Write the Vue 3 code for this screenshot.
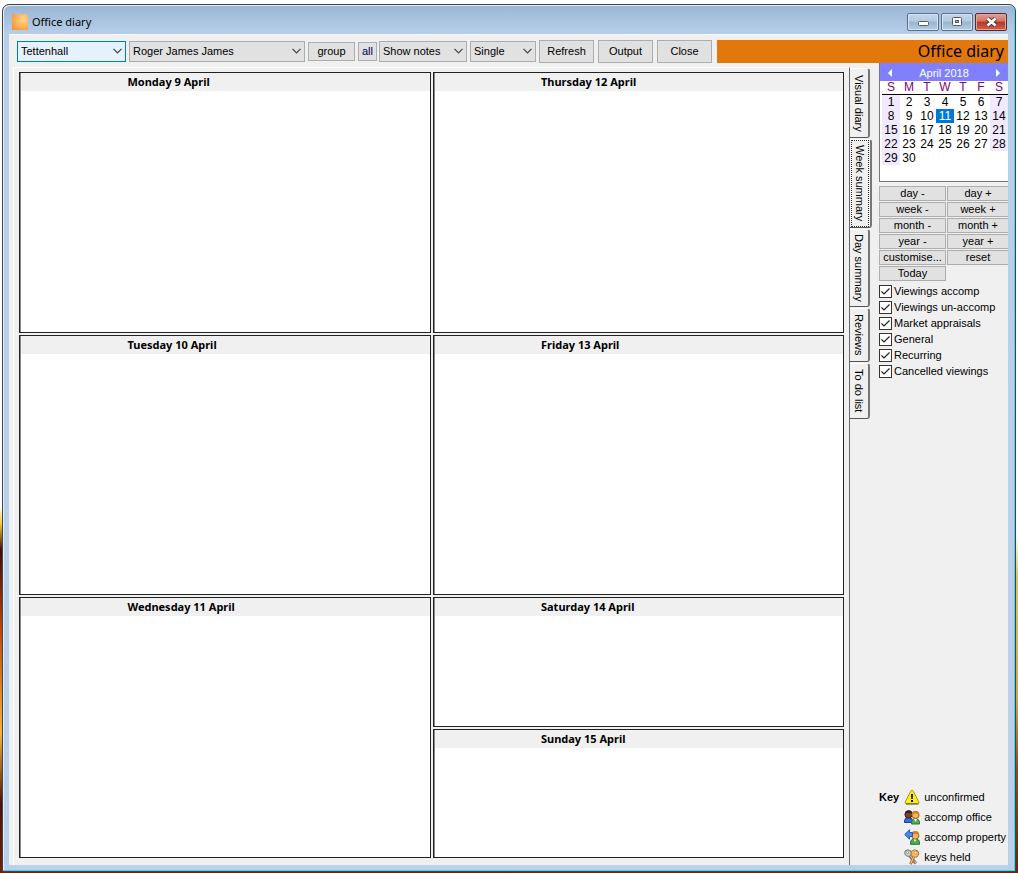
<script setup>
import { ref } from 'vue'

const combos = [
  { id: 'office', label: 'Office', value: 'Tettenhall', options: ['Tettenhall'] },
  { id: 'person', label: 'Person', value: 'Roger James James', options: ['Roger James James'] },
]
const viewCombos = [
  { id: 'notes', label: 'Notes', value: 'Show notes', options: ['Show notes', 'Hide notes'] },
  { id: 'mode', label: 'Mode', value: 'Single', options: ['Single', 'Multiple'] },
]
const actions = ['Refresh', 'Output', 'Close']

const leftDays = ['Monday 9 April', 'Tuesday 10 April', 'Wednesday 11 April']
const rightDays = ['Thursday 12 April', 'Friday 13 April']
const weekendDays = ['Saturday 14 April', 'Sunday 15 April']

const tabs = [
  { id: 'visual', label: 'Visual diary' },
  { id: 'week', label: 'Week summary' },
  { id: 'day', label: 'Day summary' },
  { id: 'reviews', label: 'Reviews' },
  { id: 'todo', label: 'To do list' },
]
const activeTab = ref('week')

const weekdays = ['S', 'M', 'T', 'W', 'T', 'F', 'S']
const weeks = [0, 1, 2, 3, 4].map((w) =>
  weekdays.map((_, d) => {
    const n = w * 7 + d + 1
    return n <= 30 ? n : null
  })
)
const selectedDay = ref(11)

const steps = ['day -', 'day +', 'week -', 'week +', 'month -', 'month +', 'year -', 'year +', 'customise...', 'reset', 'Today']

const filters = ref([
  { label: 'Viewings accomp', on: true },
  { label: 'Viewings un-accomp', on: true },
  { label: 'Market appraisals', on: true },
  { label: 'General', on: true },
  { label: 'Recurring', on: true },
  { label: 'Cancelled viewings', on: true },
])
</script>

<template>
  <div class="desktop">
    <main class="window">
      <header class="titlebar">
        <span class="app-icon"></span>
        <span class="title">Office diary</span>
        <div class="caption-buttons">
          <button class="cap" type="button" aria-label="Minimise">
            <svg width="13" height="10" viewBox="0 0 13 10"><rect x="1.5" y="4.5" width="10" height="4" rx="1" fill="#fff" stroke="#535a68" /></svg>
          </button>
          <button class="cap" type="button" aria-label="Maximise">
            <svg width="12" height="10" viewBox="0 0 12 10"><rect x="1.5" y="0.5" width="9" height="8" rx="1" fill="#fff" stroke="#535a68" /><rect x="4.5" y="3.5" width="3" height="2" fill="#9bb5d2" stroke="#535a68" /></svg>
          </button>
          <button class="cap cap-close" type="button" aria-label="Close window">
            <svg width="13" height="10" viewBox="0 0 13 10"><path d="M2.5 1.5 L10.5 8.5 M10.5 1.5 L2.5 8.5" stroke="#5b3037" stroke-width="4.4" /><path d="M2.5 1.5 L10.5 8.5 M10.5 1.5 L2.5 8.5" stroke="#fff" stroke-width="2.6" /></svg>
          </button>
        </div>
      </header>

      <div class="client">
        <div class="toolbar">
          <span v-for="c in combos" :key="c.id" class="combo" :class="'combo-' + c.id">
            <select v-model="c.value" :aria-label="c.label">
              <option v-for="o in c.options" :key="o">{{ o }}</option>
            </select>
            <svg class="chevron" width="9" height="6" viewBox="0 0 9 6"><path d="M0.5 0.8 L4.5 4.8 L8.5 0.8" fill="none" stroke="#444" stroke-width="1.2" /></svg>
          </span>
          <button class="btn small group" type="button">group</button>
          <button class="btn small all" type="button">all</button>
          <span v-for="c in viewCombos" :key="c.id" class="combo" :class="'combo-' + c.id">
            <select v-model="c.value" :aria-label="c.label">
              <option v-for="o in c.options" :key="o">{{ o }}</option>
            </select>
            <svg class="chevron" width="9" height="6" viewBox="0 0 9 6"><path d="M0.5 0.8 L4.5 4.8 L8.5 0.8" fill="none" stroke="#444" stroke-width="1.2" /></svg>
          </span>
          <div class="actions">
            <button v-for="a in actions" :key="a" class="btn action" type="button">{{ a }}</button>
          </div>
          <h1 class="banner">Office diary</h1>
        </div>

        <div class="body">
          <div class="sheet">
            <div class="column">
              <section v-for="d in leftDays" :key="d" class="day"><h2>{{ d }}</h2></section>
            </div>
            <div class="column">
              <section v-for="d in rightDays" :key="d" class="day"><h2>{{ d }}</h2></section>
              <div class="weekend">
                <section v-for="d in weekendDays" :key="d" class="day"><h2>{{ d }}</h2></section>
              </div>
            </div>
          </div>

          <div class="tabs" role="tablist" aria-orientation="vertical">
            <button
              v-for="t in tabs"
              :key="t.id"
              type="button"
              role="tab"
              class="tab"
              :class="['tab-' + t.id, { active: activeTab === t.id }]"
              :aria-selected="activeTab === t.id"
              @click="activeTab = t.id"
            ><span>{{ t.label }}</span></button>
          </div>

          <aside class="side">
            <div class="calendar">
              <div class="cal-head">
                <button type="button" aria-label="Previous month"><svg width="4" height="8" viewBox="0 0 4 8"><path d="M4 0 L0 4 L4 8 Z" fill="#fff" /></svg></button>
                <span>April 2018</span>
                <button type="button" aria-label="Next month"><svg width="4" height="8" viewBox="0 0 4 8"><path d="M0 0 L4 4 L0 8 Z" fill="#fff" /></svg></button>
              </div>
              <table>
                <thead>
                  <tr><th v-for="(d, i) in weekdays" :key="i">{{ d }}</th></tr>
                </thead>
                <tbody>
                  <tr v-for="(w, i) in weeks" :key="i">
                    <td v-for="(n, j) in w" :key="j" :class="{ weekendcell: n && (j === 0 || j === 6), selected: n === selectedDay }">{{ n }}</td>
                  </tr>
                </tbody>
              </table>
            </div>

            <div class="steps">
              <button v-for="s in steps" :key="s" class="btn step" type="button">{{ s }}</button>
            </div>

            <div class="filters">
              <label v-for="f in filters" :key="f.label" class="filter">
                <span class="box">
                  <input v-model="f.on" type="checkbox" />
                  <svg v-if="f.on" width="13" height="13" viewBox="0 0 13 13"><path d="M2.5 6.5 L5 9 L10.5 3.5" fill="none" stroke="#222" stroke-width="1.2" /></svg>
                </span>
                {{ f.label }}
              </label>
            </div>

            <div class="key">
              <strong>Key</strong>
              <ul>
                <li>
                  <svg width="16" height="16" viewBox="0 0 16 16"><path d="M8 1.2 Q8.8 1.2 9.3 2.2 L14.8 13 Q15.3 14.6 13.8 14.7 H2.2 Q0.7 14.6 1.2 13 L6.7 2.2 Q7.2 1.2 8 1.2 Z" fill="#ffed18" stroke="#b89308" /><path d="M2 15 H14.5" stroke="#55501f" /><path d="M7 5 H9 L8.7 10 H7.3 Z" fill="#111" /><rect x="7" y="11" width="2" height="2" fill="#111" /></svg>
                  unconfirmed
                </li>
                <li>
                  <svg width="16" height="16" viewBox="0 0 16 16"><path d="M0.5 12 Q0.5 8.5 4.5 8.5 Q8.5 8.5 8.5 12 V13.5 H0.5 Z" fill="#3d6ae0" stroke="#1c3b9c" /><circle cx="4.5" cy="5.5" r="3.6" fill="#80431f" stroke="#3b211b" /><path d="M1 4.5 Q1.5 1.3 5 1.3 Q8 1.3 8 4.5 Q5 3.2 1 4.5Z" fill="#292129" /><path d="M7.5 14 Q7.5 9.7 11.5 9.7 Q15.5 9.7 15.5 14 V15 H7.5 Z" fill="#4eae4c" stroke="#267838" /><path d="M10 10 L11.5 13 L13 10Z" fill="#fff" /><circle cx="11.5" cy="6" r="3.6" fill="#f6b45c" stroke="#a45c13" /><path d="M8 5 Q8 1.5 12 2 Q15.5 2 15 5.5 Q13 3.8 8 5Z" fill="#d18122" /></svg>
                  accomp office
                </li>
                <li>
                  <svg width="16" height="16" viewBox="0 0 16 16"><path d="M6.5 14 Q6.5 9.8 11 9.8 Q15.5 9.8 15.5 14 V15.3 H6.5 Z" fill="#4eae4c" stroke="#267838" /><path d="M9.5 10 L11 13 L12.5 10Z" fill="#fff" /><circle cx="11.3" cy="6.5" r="3.7" fill="#f6b45c" stroke="#a45c13" /><path d="M7.6 5.5 Q7.8 2 11.3 2.1 Q15.3 2 15 6 Q12.8 4.3 7.6 5.5Z" fill="#d18122" /><path d="M0.7 5.5 L5.5 0.8 V3.5 H8.5 V7.5 H5.5 V10.2 Z" fill="#4a87ec" stroke="#245ab8" /></svg>
                  accomp property
                </li>
                <li>
                  <svg width="16" height="16" viewBox="0 0 16 16"><path d="M1 2 L4 0.8 L7 2 L7.5 5 L5.5 7.5 L2.5 7 L0.8 5 Z" fill="#c9c9c9" stroke="#777" /><circle cx="3.5" cy="3.5" r="1" fill="#fff" stroke="#777" stroke-width="0.6" /><path d="M6 7 L11.8 14.5" fill="none" stroke="#777" stroke-width="3" /><path d="M6.4 7 L11.8 14" fill="none" stroke="#d2d2d2" /><path d="M7.2 2.5 L10.5 0.8 L14 2 L14.8 5 L13 8 L9.8 8.3 L7.2 6 Z" fill="#efc078" stroke="#b47225" /><circle cx="11.6" cy="3.6" r="1.4" fill="#fff" stroke="#b47225" stroke-width="0.7" /><path d="M9.8 7.5 L6.5 15.2 M8 11.8 L10.3 12.8" fill="none" stroke="#b47225" stroke-width="2.8" /><path d="M9.8 7.5 L6.7 14.7" stroke="#f3cf93" /></svg>
                  keys held
                </li>
              </ul>
            </div>
          </aside>
        </div>
      </div>
    </main>
  </div>
</template>

<style>
html,
body {
  margin: 0;
  background: #fff;
}
</style>

<style scoped>
* {
  box-sizing: border-box;
}
.desktop {
  display: flex;
  min-height: 100vh;
  padding: 4px 2px 1px 2px;
  font-family: "Liberation Sans", Arial, sans-serif;
  font-size: 11px;
  line-height: 14px;
  color: #000;
  background:
    linear-gradient(#fff 0, #fff 61%, #e5c355 66%, #dba43c 80%, #a24310 88%, #6a2408 100%) right / 50% 100% no-repeat,
    linear-gradient(#fff 0, #fff 58%, #f5c83c 60%, #3b0d08 63%, #b9480d 72%, #f3b43f 84%, #4b1407 92%, #6a2408 100%);
}
button,
select {
  margin: 0;
  font: inherit;
  color: inherit;
}
.window {
  flex: 1;
  min-width: 0;
  display: flex;
  flex-direction: column;
  padding: 0 7px 6px 6px;
  border: 1px solid #3c444d;
  border-radius: 7px 7px 0 0;
  background: linear-gradient(#9ab5d3 0, #b7cfea 30px, #b9d1ea 100%);
  box-shadow: inset -1px -1px 0 #3fd6f5, inset 1px 1px 0 #e4eef8;
}
.titlebar {
  display: flex;
  align-items: center;
  height: 29px;
  padding: 5px 1px 0 3px;
  gap: 4px;
}
.app-icon {
  width: 16px;
  height: 16px;
  background: radial-gradient(circle at 70% 35%, #ffd98e, #fbad53 55%, #f38b2c);
}
.title {
  flex: 1;
  font-family: "Noto Sans", sans-serif;
  font-size: 11px;
  line-height: 18px;
}
.caption-buttons {
  display: flex;
  gap: 2px;
}
.cap {
  display: flex;
  align-items: center;
  justify-content: center;
  width: 32px;
  height: 18px;
  padding: 0;
  border: 1px solid #5c6f88;
  border-radius: 2px;
  background: linear-gradient(#c4d6ea 0, #b3c9e1 45%, #99b4d0 50%, #b4cde6 100%);
  box-shadow: inset 0 0 0 1px #d6e4f2;
}
.cap-close {
  border-color: #5e2630;
  background: linear-gradient(#e0a197 0, #cf7363 45%, #b83526 50%, #d0624a 100%);
  box-shadow: inset 0 0 0 1px #dfa59b;
}
.client {
  flex: 1;
  display: flex;
  flex-direction: column;
  background: #f0f0f0;
  border-top: 1px solid #f8f8f8;
}
.toolbar {
  display: flex;
  align-items: center;
  height: 28px;
  padding: 4px 0 0 8px;
}
.combo {
  display: grid;
  height: 21px;
  margin-right: 3px;
}
.combo select {
  grid-area: 1 / 1;
  appearance: none;
  width: 100%;
  height: 21px;
  padding: 0 16px 0 3px;
  border: 1px solid #acacac;
  border-radius: 0;
  background: #e1e1e1;
}
.chevron {
  grid-area: 1 / 1;
  place-self: center end;
  margin-right: 4px;
  pointer-events: none;
}
.combo-office {
  width: 109px;
}
.combo-office select {
  border-color: #0078d7;
  background: #e5f1fb;
}
.combo-person {
  width: 176px;
}
.combo-notes {
  width: 88px;
}
.combo-mode {
  width: 66px;
}
.btn {
  padding: 0;
  border: 1px solid #adadad;
  border-radius: 0;
  background: #e1e1e1;
}
.small {
  height: 19px;
}
.group {
  width: 47px;
  margin-right: 3px;
}
.all {
  width: 19px;
  margin-right: 2px;
  color: #000050;
}
.actions {
  display: flex;
  gap: 4px;
  margin-right: 5px;
}
.action {
  width: 55px;
  height: 23px;
}
.banner {
  flex: 1;
  height: 23px;
  margin: 0;
  padding-right: 4px;
  background: #e2780c;
  font-family: "Noto Sans", sans-serif;
  font-size: 16px;
  font-weight: 400;
  line-height: 22px;
  text-align: right;
}
.body {
  flex: 1;
  display: flex;
}
.sheet {
  flex: 1;
  display: flex;
  gap: 2px;
  margin: 4px 0 0 4px;
  padding: 4px 5px 7px 5px;
  border-top: 1px solid #fff;
  border-left: 1px solid #fff;
  border-right: 1px solid #696969;
}
.column {
  flex: 1;
  display: grid;
  grid-template-rows: repeat(3, 1fr);
  gap: 2px;
}
.weekend {
  display: grid;
  grid-template-rows: repeat(2, 1fr);
  gap: 2px;
}
.day {
  border: 1px solid #222;
  box-shadow: inset 1px 0 0 #8a8a8a;
  background: #fff;
}
.day h2 {
  height: 18px;
  margin: 0 0 0 1px;
  padding-left: 26%;
  background: #f0f0f0;
  font-family: "Noto Sans", sans-serif;
  font-size: 11px;
  font-weight: 700;
  line-height: 18px;
}
.tabs {
  display: flex;
  flex-direction: column;
  align-items: flex-start;
  gap: 1px;
  width: 29px;
  padding-top: 5px;
}
.tab {
  display: flex;
  align-items: center;
  justify-content: center;
  width: 20px;
  padding: 0;
  border: 1px solid #fff;
  border-right: 2px solid #777;
  border-bottom-color: #555;
  border-left: 0;
  border-radius: 0 3px 3px 0;
  background: #f0f0f0;
}
.tab span {
  writing-mode: vertical-rl;
  line-height: 14px;
}
.tab.active {
  width: 22px;
}
.tab.active span {
  padding: 4px 1px;
  outline: 1px dotted #333;
}
.tab-visual {
  height: 70px;
}
.tab-week {
  height: 89px;
}
.tab-day {
  height: 78px;
}
.tab-reviews {
  height: 54px;
}
.tab-todo {
  height: 56px;
}
.side {
  width: 129px;
  display: flex;
  flex-direction: column;
}
.calendar {
  height: 119px;
  border-left: 1px solid #777;
  border-bottom: 1px solid #777;
  background: #fff;
  overflow: hidden;
}
.cal-head {
  display: flex;
  align-items: center;
  justify-content: space-between;
  height: 18px;
  padding: 2px 8px 0;
  background: #8080ff;
  color: #fff;
}
.cal-head button {
  display: flex;
  padding: 0;
  border: 0;
  background: none;
}
.calendar table {
  width: 126px;
  margin-left: 2px;
  border-collapse: collapse;
  table-layout: fixed;
  font-size: 12px;
}
.calendar th {
  height: 13px;
  padding: 0;
  border-bottom: 1px solid #000;
  color: #800080;
  font-weight: 400;
  line-height: 12px;
}
.calendar td {
  height: 14px;
  padding: 0;
  text-align: center;
  line-height: 14px;
}
.weekendcell {
  background: #f0e9ff;
}
.calendar td.selected {
  background: #0078d7;
  color: #fff;
}
.steps {
  display: grid;
  grid-template-columns: 67px 1fr;
  column-gap: 1px;
  row-gap: 1px;
  margin-top: 4px;
}
.step {
  height: 15px;
  line-height: 13px;
}
.step:nth-child(even) {
  border-right: 0;
}
.filters {
  margin-top: 2px;
}
.filter {
  display: flex;
  align-items: center;
  gap: 2px;
  height: 16px;
  white-space: nowrap;
}
.box {
  display: grid;
}
.box input,
.box svg {
  grid-area: 1 / 1;
}
.box input {
  appearance: none;
  width: 13px;
  height: 13px;
  margin: 0;
  border: 1px solid #333;
  background: #fff;
}
.box svg {
  pointer-events: none;
}
.key {
  display: flex;
  gap: 5px;
  margin-top: auto;
}
.key strong {
  line-height: 16px;
}
.key ul {
  display: grid;
  gap: 4px;
  margin: 0;
  padding: 0;
  list-style: none;
}
.key li {
  display: flex;
  align-items: center;
  gap: 4px;
  height: 16px;
  white-space: nowrap;
}
</style>
